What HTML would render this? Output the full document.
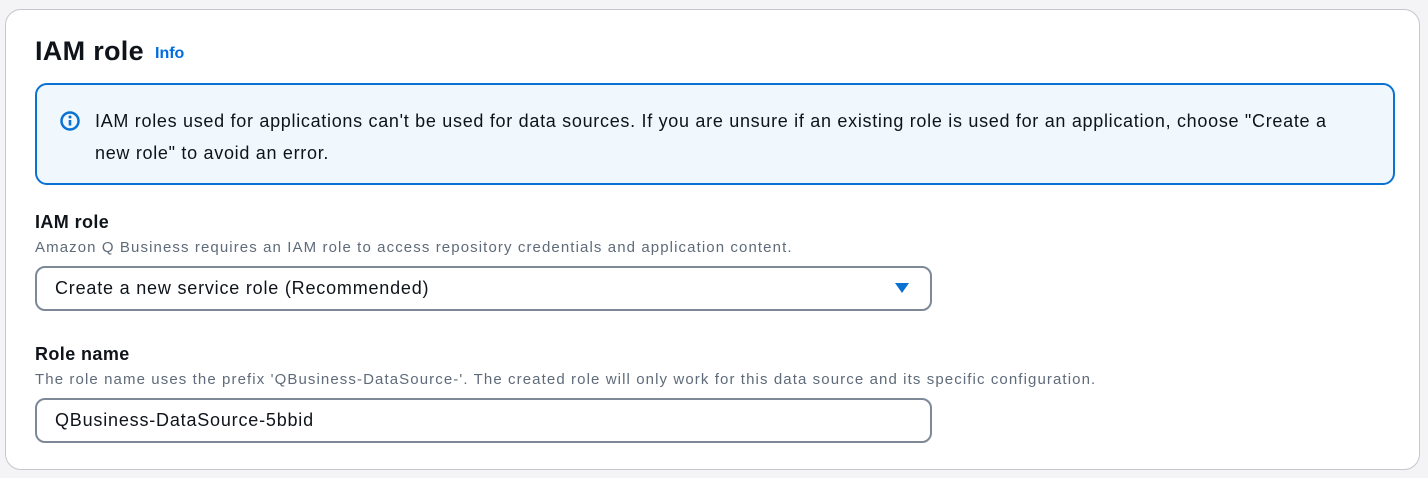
<!DOCTYPE html>
<html><head><style>
body{margin:0;width:1428px;height:478px;background:#f4f4f6;font-family:"Liberation Sans",Arial,sans-serif;color:#0f141a;position:relative;overflow:hidden}
.card{position:absolute;left:5px;top:9px;width:1415px;height:461px;background:#fff;border:1px solid #c6c6cd;border-radius:16px;box-sizing:border-box}
.abs{position:absolute;white-space:nowrap}
h1{margin:0;font-size:27px;font-weight:bold;left:29px;top:26px;letter-spacing:0.3px}
.info{font-size:16px;font-weight:bold;color:#006ce0;left:149px;top:35px}
.alert{left:29px;top:73px;width:1360px;height:102px;box-sizing:border-box;border:2px solid #0972d3;border-radius:12px;background:#f0f7fd}
.alert .t{position:absolute;left:58px;top:20px;font-size:18px;letter-spacing:0.7px;line-height:32px;white-space:normal;width:1262px;color:#0f141a}
.lbl{font-size:18px;font-weight:bold;left:29px;letter-spacing:0.4px}
.desc{font-size:15px;color:#5f6b7a;left:29px;letter-spacing:1.1px}
.field{left:29px;width:897px;height:45px;box-sizing:border-box;border:2px solid #7d8998;border-radius:10px;background:#fff}
.field span{position:absolute;left:18px;top:10px;font-size:18px;letter-spacing:0.8px}
</style></head><body>
<div class="card">
<h1 class="abs">IAM role</h1>
<div class="abs info">Info</div>
<div class="abs alert">
<svg style="position:absolute;left:22px;top:25px" width="22" height="22" viewBox="0 0 22 22"><circle cx="11" cy="11" r="8.5" fill="none" stroke="#0972d3" stroke-width="2.5"/><rect x="9.7" y="10" width="2.6" height="5.5" fill="#0972d3"/><circle cx="11" cy="7" r="1.5" fill="#0972d3"/></svg>
<div class="t">IAM roles used for applications can't be used for data sources. If you are unsure if an existing role is used for an application, choose "Create a new role" to avoid an error.</div>
</div>
<div class="abs lbl" style="top:202px">IAM role</div>
<div class="abs desc" style="top:229px">Amazon Q Business requires an IAM role to access repository credentials and application content.</div>
<div class="abs field" style="top:256px"><span>Create a new service role (Recommended)</span>
<svg style="position:absolute;left:857px;top:14px" width="16" height="12" viewBox="0 0 16 12"><path d="M1 1h14L8 11z" fill="#0972d3"/></svg></div>
<div class="abs lbl" style="top:334px">Role name</div>
<div class="abs desc" style="top:361px">The role name uses the prefix 'QBusiness-DataSource-'. The created role will only work for this data source and its specific configuration.</div>
<div class="abs field" style="top:388px"><span>QBusiness-DataSource-5bbid</span></div>
</div>
</body></html>
